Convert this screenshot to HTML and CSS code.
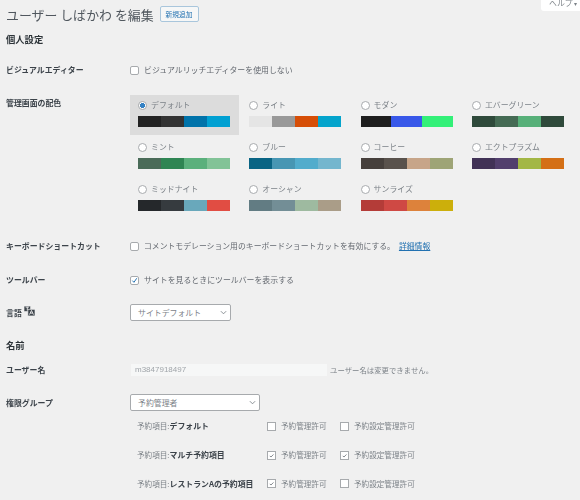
FILE: index.html
```html
<!DOCTYPE html>
<html lang="ja">
<head>
<meta charset="utf-8">
<title>ユーザーを編集</title>
<link rel="stylesheet" href="styles.css">
</head>
<body>
<a class="help-tab">ヘルプ <span class="help-arrow">▾</span></a>
<main class="wrap">
  <header class="page-head">
    <h1>ユーザー しばかわ を編集</h1>
    <a class="add-new">新規追加</a>
  </header>

  <h2 class="section first">個人設定</h2>

  <div class="row row-visual">
    <div class="label">ビジュアルエディター</div>
    <label class="check-line"><span class="cb"></span>ビジュアルリッチエディターを使用しない</label>
  </div>

  <div class="row row-scheme">
    <div class="label">管理画面の配色</div>
    <div class="schemes">
      <div class="scheme selected">
        <div class="scheme-name"><span class="radio on"></span>デフォルト</div>
        <div class="swatch"><i class="c1"></i><i class="c2"></i><i class="c3"></i><i class="c4"></i></div>
      </div>
      <div class="scheme">
        <div class="scheme-name"><span class="radio"></span>ライト</div>
        <div class="swatch"><i class="l1"></i><i class="l2"></i><i class="l3"></i><i class="l4"></i></div>
      </div>
      <div class="scheme">
        <div class="scheme-name"><span class="radio"></span>モダン</div>
        <div class="swatch"><i class="mo1"></i><i class="mo2"></i><i class="mo3"></i></div>
      </div>
      <div class="scheme">
        <div class="scheme-name"><span class="radio"></span>エバーグリーン</div>
        <div class="swatch"><i class="e1"></i><i class="e2"></i><i class="e3"></i><i class="e4"></i></div>
      </div>
      <div class="scheme">
        <div class="scheme-name"><span class="radio"></span>ミント</div>
        <div class="swatch"><i class="mi1"></i><i class="mi2"></i><i class="mi3"></i><i class="mi4"></i></div>
      </div>
      <div class="scheme">
        <div class="scheme-name"><span class="radio"></span>ブルー</div>
        <div class="swatch"><i class="b1"></i><i class="b2"></i><i class="b3"></i><i class="b4"></i></div>
      </div>
      <div class="scheme">
        <div class="scheme-name"><span class="radio"></span>コーヒー</div>
        <div class="swatch"><i class="co1"></i><i class="co2"></i><i class="co3"></i><i class="co4"></i></div>
      </div>
      <div class="scheme">
        <div class="scheme-name"><span class="radio"></span>エクトプラズム</div>
        <div class="swatch"><i class="ec1"></i><i class="ec2"></i><i class="ec3"></i><i class="ec4"></i></div>
      </div>
      <div class="scheme">
        <div class="scheme-name"><span class="radio"></span>ミッドナイト</div>
        <div class="swatch"><i class="mn1"></i><i class="mn2"></i><i class="mn3"></i><i class="mn4"></i></div>
      </div>
      <div class="scheme">
        <div class="scheme-name"><span class="radio"></span>オーシャン</div>
        <div class="swatch"><i class="o1"></i><i class="o2"></i><i class="o3"></i><i class="o4"></i></div>
      </div>
      <div class="scheme">
        <div class="scheme-name"><span class="radio"></span>サンライズ</div>
        <div class="swatch"><i class="s1"></i><i class="s2"></i><i class="s3"></i><i class="s4"></i></div>
      </div>
    </div>
  </div>

  <div class="row row-keys">
    <div class="label">キーボードショートカット</div>
    <label class="check-line keys-line"><span class="cb"></span>コメントモデレーション用のキーボードショートカットを有効にする。 <a class="link">詳細情報</a></label>
  </div>

  <div class="row row-toolbar">
    <div class="label">ツールバー</div>
    <label class="check-line"><span class="cb checked blue"><svg viewBox="0 0 10 10"><path d="M2 5.200 4.200 7.600 8.200 1.800"/></svg></span>サイトを見るときにツールバーを表示する</label>
  </div>

  <div class="row row-lang">
    <div class="label lang-label">言語
      <svg class="lang-icon" viewBox="0 0 10 9"><path class="fill" d="M0 0h6v5H0z"/><path class="gap" d="M1.500 1h3M3 1v3"/><path class="fill" d="M3.500 3h6.500v6H3.500z"/><path class="gap" d="M5 7.800 6.800 4 8.600 7.800M5.700 6.400h2.200"/></svg>
    </div>
    <div class="select lang-select">サイトデフォルト<svg class="chev" viewBox="0 0 8 5"><path d="M1 1l3 3 3-3"/></svg></div>
  </div>

  <h2 class="section name-head">名前</h2>

  <div class="row row-user">
    <div class="label">ユーザー名</div>
    <div class="user-field"><span class="user-input">m3847918497</span><span class="note">ユーザー名は変更できません。</span></div>
  </div>

  <div class="row row-role">
    <div class="label">権限グループ</div>
    <div class="select role-select">予約管理者<svg class="chev" viewBox="0 0 8 5"><path d="M1 1l3 3 3-3"/></svg></div>
  </div>

  <div class="perms">
    <div class="perm">
      <div class="perm-name">予約項目:<b>デフォルト</b></div>
      <label class="perm-check"><span class="cb big"></span>予約管理許可</label>
      <label class="perm-check"><span class="cb big"></span>予約設定管理許可</label>
    </div>
    <div class="perm">
      <div class="perm-name">予約項目:<b>マルチ予約項目</b></div>
      <label class="perm-check"><span class="cb big checked"><svg viewBox="0 0 10 10"><path d="M2.500 5.500 4.200 7.200 7.800 3.500"/></svg></span>予約管理許可</label>
      <label class="perm-check"><span class="cb big checked"><svg viewBox="0 0 10 10"><path d="M2.500 5.500 4.200 7.200 7.800 3.500"/></svg></span>予約設定管理許可</label>
    </div>
    <div class="perm">
      <div class="perm-name">予約項目:<b>レストランAの予約項目</b></div>
      <label class="perm-check"><span class="cb big checked"><svg viewBox="0 0 10 10"><path d="M2.500 5.500 4.200 7.200 7.800 3.500"/></svg></span>予約管理許可</label>
      <label class="perm-check"><span class="cb big"></span>予約設定管理許可</label>
    </div>
  </div>
</main>
</body>
</html>
```
FILE: styles.css
```css
* { box-sizing: border-box; }
html, body { margin: 0; height: 500px; overflow: hidden; }
body {
  position: relative;
  background: #f0f0f0;
  color: #646970;
  font-family: "Noto Sans CJK JP", "Liberation Sans", sans-serif;
  font-size: 7.900px;
  line-height: 12px;
}
.help-tab {
  position: absolute;
  top: 0;
  right: 0;
  width: 39px;
  height: 11px;
  padding-left: 8px;
  background: #fff;
  border-radius: 0 0 0 3px;
  color: #7c8288;
  font-size: 7.900px;
  line-height: 5px;
  white-space: nowrap;
  filter: blur(.4px);
}
.help-arrow { font-size: 6px; }
.wrap { padding-left: 6px; filter: blur(.4px); }
.page-head { display: flex; align-items: center; height: 22px; padding-top: 6px; }
h1 { margin: 0; font-size: 12.900px; font-weight: 400; line-height: 15px; color: #50575e; }
.add-new {
  margin-left: 6px;
  width: 39px;
  height: 16px;
  border: 1px solid #a9c6dc;
  border-radius: 2px;
  background: #f6f7f7;
  color: #2271b1;
  font-size: 6.800px;
  line-height: 14px;
  text-align: center;
}
.section { margin: 0; font-size: 9.300px; font-weight: 700; line-height: 14px; color: #2c3338; }
.first { margin-top: 10px; }
.row { display: grid; grid-template-columns: 124px 1fr; }
.label { font-weight: 700; color: #3c434a; font-size: 7.900px; line-height: 12px; }
.row-visual { margin-top: 18px; }
.row-scheme { margin-top: 21px; }
.check-line { display: flex; align-items: center; white-space: nowrap; }
.keys-line { font-size: 7.850px; }
.cb {
  flex: none;
  display: block;
  width: 9px;
  height: 9px;
  margin-right: 5px;
  background: #fff;
  border: 1px solid #a7aaad;
  border-radius: 2px;
}
.cb svg { display: block; width: 100%; height: 100%; fill: none; stroke: #50575e; stroke-width: 1; }
.cb.blue svg { stroke: #2271b1; stroke-width: 1.400; }
.cb.big { border-radius: 0; }
.schemes { display: grid; grid-template-columns: repeat(4, 109px); column-gap: 2.300px; row-gap: 2px; margin-top: -2px; }
.scheme { height: 40px; padding: 4px 8px 0; }
.scheme.selected { background: #dcdcdc; }
.scheme-name { display: flex; align-items: center; height: 12px; white-space: nowrap; color: #7c8288; }
.radio {
  flex: none;
  width: 9px;
  height: 9px;
  margin-right: 4px;
  background: #fff;
  border: 1px solid #a7aaad;
  border-radius: 50%;
}
.radio.on { background: radial-gradient(circle, #3582c4 0 2.300px, #fff 2.800px); }
.swatch { display: flex; width: 92px; height: 11px; margin-top: 5px; }
.swatch i { flex: 1; display: block; }
.c1 { background: #222; } .c2 { background: #333; } .c3 { background: #0073aa; } .c4 { background: #00a0d2; }
.l1 { background: #e5e5e5; } .l2 { background: #999; } .l3 { background: #d64e07; } .l4 { background: #04a4cc; }
.mo1 { background: #1e1e1e; } .mo2 { background: #3858e9; } .mo3 { background: #33f078; }
.e1 { background: #2f4a3b; } .e2 { background: #456b54; } .e3 { background: #57b079; } .e4 { background: #2f4a3b; }
.mi1 { background: #4a6b58; } .mi2 { background: #2f8553; } .mi3 { background: #5bb07c; } .mi4 { background: #82c397; }
.b1 { background: #096484; } .b2 { background: #4796b3; } .b3 { background: #52accc; } .b4 { background: #74b6ce; }
.co1 { background: #46403c; } .co2 { background: #59524c; } .co3 { background: #c7a589; } .co4 { background: #9ea476; }
.ec1 { background: #413256; } .ec2 { background: #523f6d; } .ec3 { background: #a3b745; } .ec4 { background: #d46f15; }
.mn1 { background: #25282b; } .mn2 { background: #363b3f; } .mn3 { background: #69a8bb; } .mn4 { background: #e14d43; }
.o1 { background: #627c83; } .o2 { background: #738e96; } .o3 { background: #9ebaa0; } .o4 { background: #aa9d88; }
.s1 { background: #b43c38; } .s2 { background: #cf4944; } .s3 { background: #dd823b; } .s4 { background: #ccaf0b; }
.row-keys { margin-top: 21px; }
.link { margin-left: 4px; color: #2271b1; text-decoration: underline; }
.row-toolbar { margin-top: 22px; }
.row-lang { margin-top: 18px; align-items: center; }
.lang-label { display: flex; align-items: center; gap: 2px; }
.lang-icon { width: 11px; height: 10px; margin-top: -3px; }
.lang-icon .fill { fill: #3c434a; stroke: #f0f0f0; stroke-width: .6; }
.lang-icon .gap { fill: none; stroke: #f0f0f0; stroke-width: .8; }
.select {
  position: relative;
  height: 17px;
  padding-left: 7px;
  background: #fff;
  border: 1px solid #a7aaad;
  border-radius: 2px;
  color: #7c8288;
  line-height: 15px;
}
.lang-select { width: 101px; }
.role-select { width: 130px; }
.chev { position: absolute; right: 3px; top: 5px; width: 7px; height: 5px; fill: none; stroke: #7c8288; stroke-width: 1; }
.name-head { margin-top: 17px; }
.row-user { margin-top: 12px; }
.user-field { display: flex; align-items: center; padding-left: 1px; }
.user-input {
  width: 196px;
  height: 12px;
  padding-left: 4px;
  background: #f6f7f7;
  color: #a0a5aa;
  font-size: 8px;
  line-height: 12px;
  font-family: "Liberation Sans", sans-serif;
}
.note { margin-left: 3px; font-size: 7.400px; color: #7c8288; }
.row-role { margin-top: 18px; align-items: center; }
.perms { padding-left: 131px; margin-top: 1px; }
.perm { display: flex; align-items: center; height: 28.700px; font-size: 7.600px; color: #7c8288; white-space: nowrap; }
.perm-name { width: 130px; }
.perm-name b { font-size: 7.900px; font-weight: 700; color: #3c434a; }
.perm-check { display: flex; align-items: center; width: 73px; }
```
